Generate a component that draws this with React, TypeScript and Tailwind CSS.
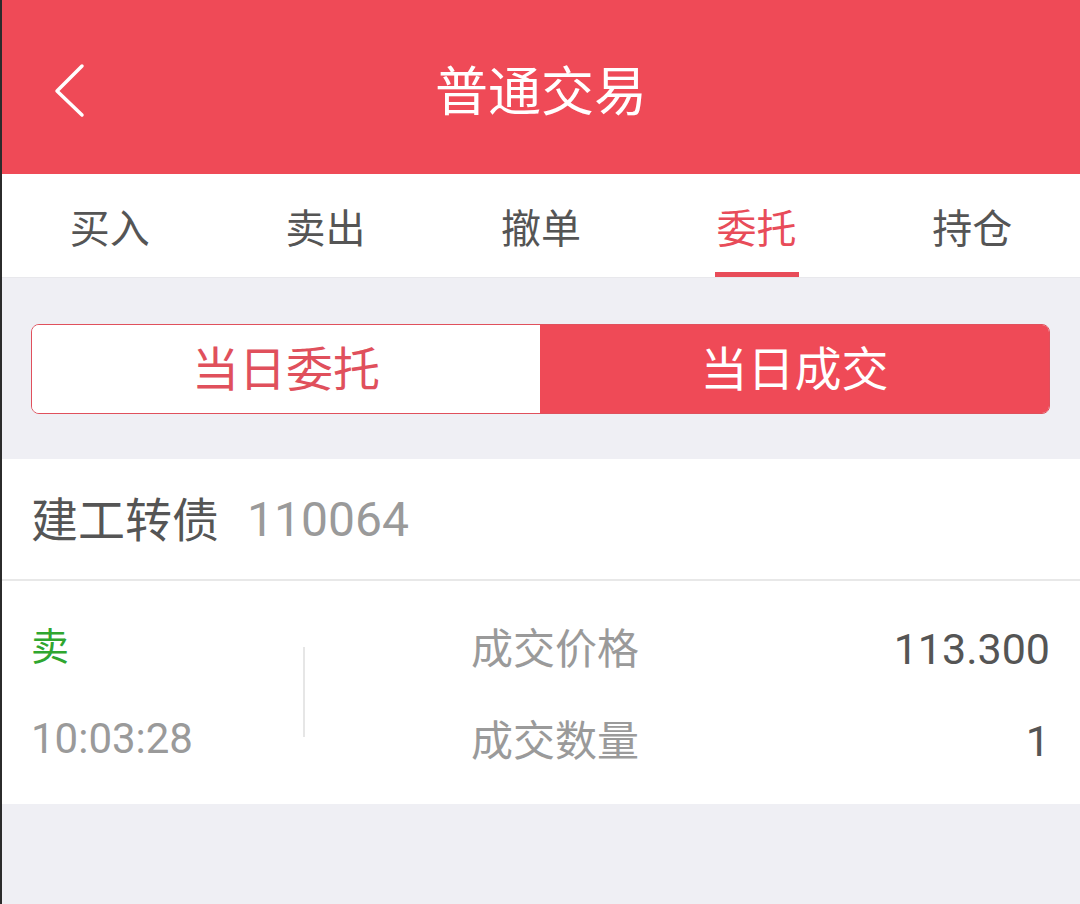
import React from "react";

const tabs = ["买入", "卖出", "撤单", "委托", "持仓"];

export default function App() {
  return (
    <div
      className="w-[1080px] h-[904px] bg-[#efeff4] border-l-2 border-[#2b2b2b] flex flex-col overflow-hidden"
      style={{ fontFamily: "Roboto, 'Noto Sans CJK SC', sans-serif" }}
    >
      {/* Header */}
      <div className="h-[174px] bg-[#ef4a57] flex items-center relative shrink-0 pt-[12px]">
        <svg
          className="absolute left-[50px] top-[63px]"
          width="36"
          height="56"
          viewBox="0 0 36 56"
          fill="none"
        >
          <path d="M30 3 L5 28 L30 52" stroke="white" strokeWidth="3.5" strokeLinecap="round" strokeLinejoin="round" />
        </svg>
        <div className="w-full text-center text-white text-[53px] leading-none">普通交易</div>
      </div>

      {/* Tabs */}
      <div className="h-[104px] bg-white flex shrink-0 border-b border-[#e8e8ec]">
        {tabs.map((t, i) => (
          <div key={t} className="flex-1 flex flex-col items-center justify-end">
            <div
              className={`text-[40px] leading-none pb-[22px] ${i === 3 ? "text-[#e84c59]" : "text-[#555555]"}`}
            >
              {t}
            </div>
            <div className={`h-[5px] w-[84px] ${i === 3 ? "bg-[#e84c59]" : "bg-transparent"}`} />
          </div>
        ))}
      </div>

      {/* Segmented control */}
      <div className="pl-[29px] pr-[30px] pt-[46px] pb-[45px] shrink-0">
        <div className="h-[90px] flex rounded-[8px] border border-[#e0505c] overflow-hidden">
          <div className="w-[508px] bg-white flex items-center justify-center text-[#e0505c] text-[47px] leading-none">
            当日委托
          </div>
          <div className="flex-1 bg-[#ef4a57] flex items-center justify-center text-white text-[47px] leading-none">
            当日成交
          </div>
        </div>
      </div>

      {/* Card */}
      <div className="bg-white shrink-0">
        <div className="h-[122px] flex items-center pl-[29px] pt-[2px] border-b-2 border-[#e8e8e8] gap-[28px]">
          <span className="text-[#555555] text-[47px] leading-none">建工转债</span>
          <span className="text-[#9a9a9a] text-[48px] leading-none">110064</span>
        </div>
        <div className="h-[223px] flex items-start pl-[29px] pr-[30px] pt-[47px]">
          <div className="w-[272px] flex flex-col">
            <span className="text-[#2fa62f] text-[38px] leading-none">卖</span>
            <span className="text-[#9a9a9a] text-[42px] leading-none mt-[52px]">10:03:28</span>
          </div>
          <div className="w-[2px] h-[90px] bg-[#e6e6e6] mt-[19px]" />
          <div className="flex-1 flex flex-col gap-[49px] pl-[166px]">
            <div className="flex items-center justify-between">
              <span className="text-[#9a9a9a] text-[42px] leading-none">成交价格</span>
              <span className="text-[#555555] text-[43px] leading-none">113.300</span>
            </div>
            <div className="flex items-center justify-between">
              <span className="text-[#9a9a9a] text-[42px] leading-none">成交数量</span>
              <span className="text-[#555555] text-[43px] leading-none">1</span>
            </div>
          </div>
        </div>
      </div>
    </div>
  );
}
